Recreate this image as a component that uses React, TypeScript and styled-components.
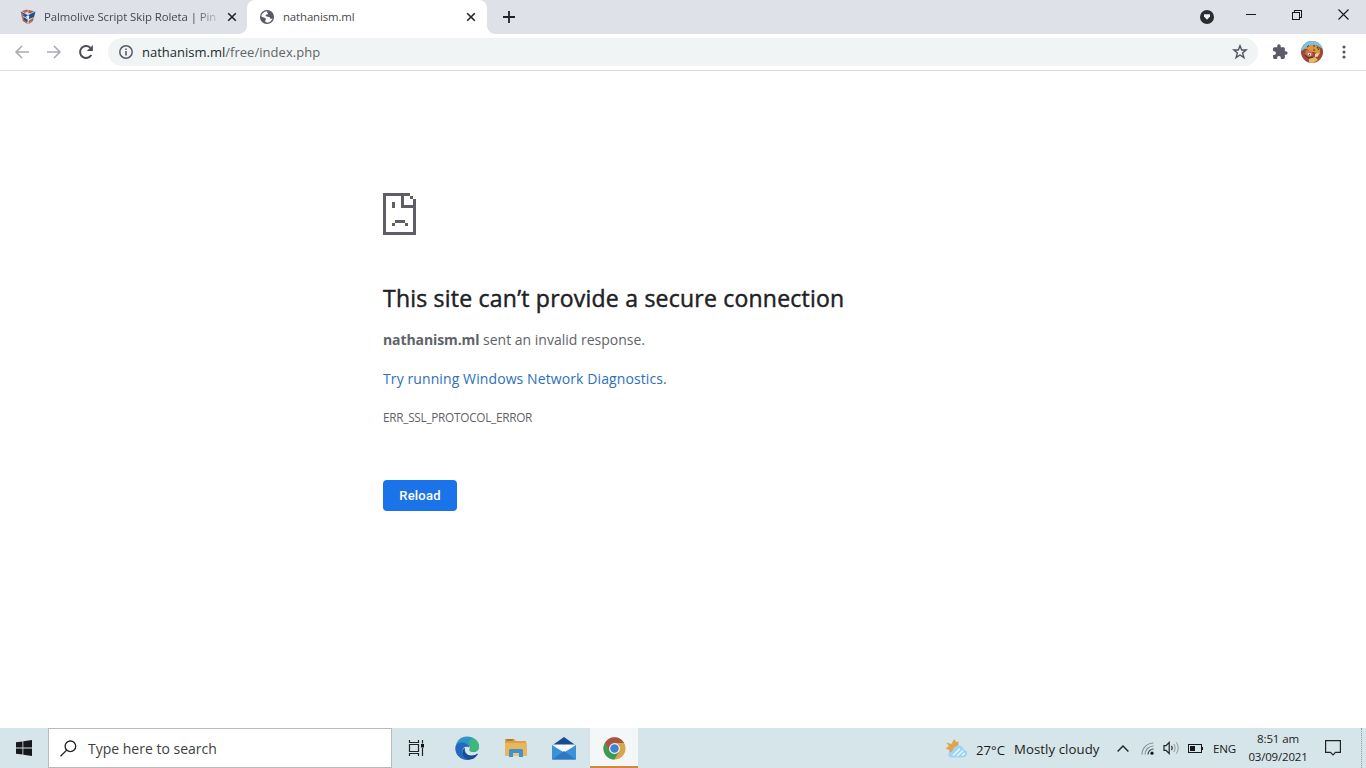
import React from "react";
import styled, { createGlobalStyle } from "styled-components";

const GlobalStyle = createGlobalStyle`
  * {
    box-sizing: border-box;
  }

  body {
    margin: 0;
    background: #ffffff;
    font-family: "Open Sans", "Noto Sans", sans-serif;
    overflow: hidden;
  }

  svg {
    display: block;
    flex: none;
  }
`;

const Screen = styled.div`
  width: 1366px;
  height: 768px;
  display: flex;
  flex-direction: column;
  background: #ffffff;
`;

/* Text whose glyphs are set on one line at a given size */
const Label = styled.span<{ $size: number; $spacing?: number; $color?: string }>`
  font-size: ${(p) => p.$size}px;
  letter-spacing: ${(p) => p.$spacing ?? 0}px;
  color: ${(p) => p.$color ?? "#1b1b1b"};
  white-space: pre;
`;

const TabStrip = styled.div`
  display: flex;
  height: 34px;
  flex: none;
  background: #dee1e8;
`;

const Tab = styled.div<{ $active?: boolean; $width: number }>`
  position: relative;
  display: flex;
  align-items: center;
  width: ${(p) => p.$width}px;
  height: 34px;
  padding: ${(p) => (p.$active ? "0 9px 0 12px" : "0 9px 0 20px")};
  border-radius: 8px 8px 0 0;
  background: ${(p) => (p.$active ? "#ffffff" : "transparent")};

  &::before,
  &::after {
    content: "";
    display: ${(p) => (p.$active ? "block" : "none")};
    position: absolute;
    bottom: 0;
    width: 8px;
    height: 8px;
  }

  &::before {
    left: -8px;
    background: radial-gradient(circle at 0 0, transparent 7.5px, #ffffff 8px);
  }

  &::after {
    right: -8px;
    background: radial-gradient(circle at 100% 0, transparent 7.5px, #ffffff 8px);
  }
`;

const TabTitle = styled.div<{ $fade?: boolean }>`
  flex: 1;
  display: flex;
  margin: 0 7px 0 8px;
  line-height: 16px;
  mask-image: ${(p) => (p.$fade ? "linear-gradient(to right, #000 86%, transparent 102%)" : "none")};
`;

const NewTab = styled.div`
  display: flex;
  align-items: center;
  margin-left: 16px;
`;

const WindowControls = styled.div`
  display: flex;
  margin-left: auto;
`;

const Control = styled.div<{ $width: number; $height?: number }>`
  display: flex;
  align-items: center;
  justify-content: center;
  width: ${(p) => p.$width}px;
  height: ${(p) => p.$height ?? 29}px;
`;

const Toolbar = styled.div`
  display: flex;
  align-items: center;
  height: 37px;
  flex: none;
  padding: 0 6px;
  border-bottom: 1px solid #dcdcde;
`;

const AddressBar = styled.div`
  display: flex;
  align-items: center;
  width: 1150px;
  height: 28px;
  margin: 0 6px;
  padding: 0 10px 0 11px;
  border-radius: 14px;
  background: #f1f4f4;
`;

const Url = styled.div`
  flex: 1;
  margin-left: 9px;
  padding-bottom: 2px;
  line-height: 18px;
`;

const Page = styled.main`
  flex: 1;
  padding: 122px 0 0 383px;
`;

const Title = styled.h1`
  margin: 46px 0 0;
  font-size: 23px;
  font-weight: 400;
  line-height: 34px;
  letter-spacing: 0.22px;
  color: #202124;
  -webkit-text-stroke: 0.45px #202124;
  white-space: nowrap;
`;

const Line = styled.p<{ $top: number }>`
  margin: ${(p) => p.$top}px 0 0;
  height: 24px;
  line-height: 24px;

  b {
    font-weight: 700;
    letter-spacing: -0.1px;
  }
`;

const ReloadButton = styled.button`
  display: block;
  width: 74px;
  height: 31px;
  margin-top: 52px;
  padding: 0;
  border: none;
  border-radius: 4px;
  background: #1a73e8;
  color: #ffffff;
  font-family: Roboto, sans-serif;
  font-size: 13px;
  font-weight: 500;
  line-height: 31px;
  letter-spacing: 0.2px;
`;

const Taskbar = styled.footer`
  display: flex;
  height: 40px;
  flex: none;
  background: #d6e5ea;
`;

const Slot = styled.div<{ $width: number; $active?: boolean }>`
  display: flex;
  align-items: center;
  justify-content: center;
  width: ${(p) => p.$width}px;
  height: 40px;
  flex: none;
  background: ${(p) => (p.$active ? "#f3f7f8" : "transparent")};
  border-bottom: ${(p) => (p.$active ? "2px solid #d0873f" : "none")};
  padding-top: ${(p) => (p.$active ? 2 : 0)}px;
`;

const SearchBox = styled.div`
  display: flex;
  align-items: center;
  gap: 11px;
  width: 344px;
  height: 40px;
  padding-left: 11px;
  border: 1px solid #b9bcbe;
  background: #ffffff;
`;

const Tray = styled.div`
  display: flex;
  align-items: center;
  margin-left: auto;
`;

const Weather = styled.div`
  display: flex;
  align-items: center;
  width: 166px;
  padding-top: 1px;
`;

const Temperature = styled.div`
  width: 38px;
  margin-left: 8px;
  flex: none;
`;

const Clock = styled.div`
  display: flex;
  flex-direction: column;
  align-items: center;
  width: 72px;
  line-height: 18px;
`;

const ShowDesktop = styled.div`
  width: 5px;
  height: 40px;
  border-left: 1px dotted #8d9aa0;
`;

const CloseIcon = () => (
  <svg width="10" height="10" viewBox="0 0 10 10">
    <path d="M1.2 1.2 8.8 8.8M8.8 1.2 1.2 8.8" stroke="#232529" strokeWidth="1.6" />
  </svg>
);

const CubeIcon = () => (
  <svg width="16" height="16" viewBox="0 0 16 16">
    <path d="M8 0.5 15.5 2.5 13.5 11.5 8 15.5 2.5 12 0.5 2.5Z" fill="#d0d9e4" />
    <path d="M0.5 2.5 7.5 6 7.5 9 3 7Z" fill="#17549b" />
    <path d="M2 7.5 7 10.5 7.5 15 2.8 12Z" fill="#b6654d" />
    <path d="M3.5 8 7.5 10.5 7.5 13 4 11Z" fill="#214f82" />
    <path d="M8.5 6 15.5 2.5 14 8 9 10Z" fill="#1d4f88" />
    <path d="M9 11.5 13.7 8.5 13 12 8.5 15.3Z" fill="#b6654d" />
    <path d="M2 2 7 0.5 9 2 4.5 4Z" fill="#be6344" />
    <path d="M9 1 14 2.3 10.5 4.5 8 3.5Z" fill="#af5d48" />
    <path d="M1 4 3.6 5 3 8.8 1.7 8Z" fill="#c46e50" />
    <path d="M5.8 7.5 8 6.8 9.6 7.8 8 9.4Z" fill="#edf2f6" />
  </svg>
);

const GlobeIcon = () => (
  <svg width="16" height="16" viewBox="0 0 16 16">
    <circle cx="8" cy="8" r="6.4" fill="#ffffff" stroke="#5a5967" strokeWidth="1.3" />
    <path
      d="M9 1.6C7.8 2.6 7.6 3.6 8.8 4.200 9.600 4.700 8.800 5.400 7.400 5.600 6.200 5.900 6.300 7.300 7.600 7.600 9.500 8 10.900 7.800 11.200 9.200 11.400 10.200 12.600 9.900 14.200 9.200 15 5.100 12.500 1.800 9 1.600Z"
      fill="#5a5967"
    />
    <path d="M1.700 7.600C3.500 8.200 6.300 8.600 6.900 9.800 7.300 10.900 5.600 11.200 6.300 12.500 6.600 13.400 7.600 13.200 8.400 14.300 4.600 14.700 1.500 11.700 1.700 7.600Z" fill="#5a5967" />
  </svg>
);

const ArrowIcon = ({ forward }: { forward?: boolean }) => (
  <svg width="16" height="16" viewBox="0 0 16 16">
    <g
      transform={forward ? "translate(16 0) scale(-1 1)" : undefined}
      fill="none"
      stroke="#aaa9b1"
      strokeWidth="1.5"
    >
      <path d="M15 8H2M8 2 2 8 8 14" />
    </g>
  </svg>
);

const ReloadIcon = () => (
  <svg width="16" height="16" viewBox="0 0 16 16">
    <path d="M13.3 11A6 6 0 1 1 12.3 3.7" fill="none" stroke="#4c4d56" strokeWidth="2" />
    <path d="M14.9 0.9V7H8.8Z" fill="#4c4d56" />
  </svg>
);

const InfoIcon = () => (
  <svg width="14" height="14" viewBox="0 0 14 14">
    <circle cx="7" cy="7" r="6.2" fill="none" stroke="#5a5b66" strokeWidth="1.5" />
    <path d="M7 6V10.5M7 3.4V5" stroke="#5a5b66" strokeWidth="1.6" />
  </svg>
);

const StarIcon = () => (
  <svg width="16" height="16" viewBox="0 0 16 16">
    <path
      d="M8 1.8 9.7 6H14.1L10.6 8.9 11.9 13.6 8 11 4.1 13.6 5.4 8.9 1.9 6H6.3Z"
      fill="none"
      stroke="#50505f"
      strokeWidth="1.4"
    />
  </svg>
);

const PuzzleIcon = () => (
  <svg width="16" height="16" viewBox="0.5 0.5 23 23">
    <path
      d="M20.5 11H19V7c0-1.1-.9-2-2-2h-4V3.5a2.5 2.5 0 0 0-5 0V5H4c-1.1 0-2 .9-2 2v3.8h1.5a2.7 2.7 0 0 1 0 5.4H2V20c0 1.1.9 2 2 2h3.8v-1.5a2.7 2.7 0 0 1 5.4 0V22H17c1.1 0 2-.9 2-2v-4h1.5a2.5 2.5 0 0 0 0-5z"
      fill="#5c5b68"
    />
  </svg>
);

const AvatarIcon = () => (
  <svg width="22" height="22" viewBox="0 0 22 22">
    <clipPath id="avatar">
      <circle cx="11" cy="11" r="11" />
    </clipPath>
    <g clipPath="url(#avatar)">
      <path d="M0 0H22V22H0Z" fill="#9d4935" />
      <path d="M0 0H22V8L15 4 8 5 2 9 0 10Z" fill="#7cc0e4" />
      <path d="M3 8 8 4.5 14 3.5 19 8 19 13 16 15 14 11 9 11 6 8Z" fill="#d9963c" />
      <path d="M5 9 10 10 12 14 8 16 4 13Z" fill="#c9745a" />
      <path d="M7 12 10 12.5 10 14.5 7 14Z" fill="#efe0cd" />
      <path d="M14 13 18 12 17 15.5 14 16Z" fill="#ecd3ba" />
      <path d="M8 18 14 16 17 19 12 22 8 22Z" fill="#e6b764" />
      <path d="M6 6 8 4.5M12 5H14M16 6 18 9M8 13.5H9M12 9H14M4 14 7 17 12 16" fill="none" stroke="#4c3030" />
    </g>
  </svg>
);

const MenuDots = () => (
  <svg width="4" height="14" viewBox="0 0 4 14">
    <circle cx="2" cy="2" r="1.5" fill="#51515c" />
    <circle cx="2" cy="7" r="1.5" fill="#51515c" />
    <circle cx="2" cy="12" r="1.5" fill="#51515c" />
  </svg>
);

const SadPageIcon = () => (
  <svg width="33" height="42" viewBox="0 0 11 14" shapeRendering="crispEdges">
    <path
      d="M0 0H9V1H7V4H11V14H0ZM1 1V13H10V5H6V1ZM9 1H10V2H9ZM10 2H11V4H10ZM3 3H4V5H3ZM4 9H7.300V10H4ZM3 10H4V11H3ZM7.300 10H8.300V11H7.300Z"
      fill="#5f5e66"
      fillRule="evenodd"
    />
  </svg>
);

const WindowsIcon = () => (
  <svg width="16" height="16" viewBox="0 0 16 16">
    <path d="M0 2.3 6.5 1.4V7.6H0ZM7.3 1.3 16 0V7.6H7.3ZM0 8.4H6.5V14.6L0 13.7ZM7.3 8.4H16V16L7.3 14.7Z" fill="#16181b" />
  </svg>
);

const SearchIcon = () => (
  <svg width="17" height="17" viewBox="0 0 17 17">
    <circle cx="10.4" cy="6.3" r="5.3" fill="none" stroke="#222" strokeWidth="1.3" />
    <path d="M6.7 10.1 0.5 16.3" stroke="#222" strokeWidth="1.3" />
  </svg>
);

const TaskViewIcon = () => (
  <svg width="17" height="16" viewBox="0 0 17 16">
    <path d="M1.5 0V2.5H10.5V0M1.5 16V13.5H10.5V16M1.5 4.5H10.5V11.5H1.5ZM14.5 0V3.5M14.5 8V16" fill="none" stroke="#202428" strokeWidth="1.2" />
    <path d="M13 4H16V7.5H13Z" fill="#111" />
  </svg>
);

const EdgeIcon = () => (
  <svg width="24" height="24" viewBox="0 0 24 24">
    <path d="M0.5 11C1.5 4.5 6 0.5 12 0.5 19 0.5 24 5 24 10.5 24 14 21.5 16 18.5 16 15.5 16 14 15 14.5 13.5 15.5 12 15 8.5 10.5 7.5 6 6.6 2 8 0.5 11Z" fill="#3295c9" />
    <path d="M17 2C21.3 3.5 24 7 24 10.7 24 14 21.5 16 18.5 16 15.5 16 14 15 14.5 13.5 16.5 11 15.5 8.5 13.5 6.5Z" fill="#3fb878" />
    <path d="M0.3 12C0.5 7 7 5 11.5 7.5 13.8 8.8 14.5 10 14.4 11.5 11 9.5 7.5 11.5 7.5 15 7.5 19 11 23 15.5 23.5 7 25.5 0 19.5 0.3 12Z" fill="#2469c0" />
    <path d="M10 12C9 16 12 19.5 16.5 19.5 19 19.5 20.5 18.8 22 17.8 22.8 17.5 23 18 22.5 18.8 20.5 22 17.5 23.7 14 23.7 9.5 22.8 7.3 19 7.5 15.5 7.6 13.5 8.5 12.5 10 12Z" fill="#164c93" />
  </svg>
);

const ExplorerIcon = () => (
  <svg width="22" height="20" viewBox="0 0 22 20">
    <path d="M0 1H9L11 3H21V18H0Z" fill="#dda049" />
    <path d="M0 5H22V18H0Z" fill="#eab65c" />
    <path d="M1.5 2H8" stroke="#8f6332" strokeWidth="1.2" />
    <path d="M4 12 5 11H17L18 12V19H14V15H8V19H4Z" fill="#3f91cf" />
    <path d="M8 15H14V18H8Z" fill="#f0c476" />
  </svg>
);

const MailIcon = () => (
  <svg width="24" height="23" viewBox="0 0 24 23">
    <path d="M0 8.500 12 0 24 8.500Z" fill="#194b92" />
    <path d="M1 7.5H23V15H1Z" fill="#f7fbfe" />
    <path d="M0 8 12 15.5 24 8V22.5H0Z" fill="#3c91d8" />
    <path d="M0 22.5 12 14 24 22.5Z" fill="#2c78c4" />
  </svg>
);

const ChromeIcon = () => (
  <svg width="23" height="23" viewBox="0 0 24 24">
    <circle cx="12" cy="12" r="11.5" fill="#d8a548" />
    <path d="M2 6.2A11.5 11.5 0 0 1 22 6.2H12L7 15Z" fill="#a85445" />
    <path d="M2 6.2 7 14.9 12 17.8 16.8 15 11.8 23.5A11.5 11.5 0 0 1 2 6.2Z" fill="#3c9a55" />
    <circle cx="12" cy="12" r="5.7" fill="#eef3f8" />
    <circle cx="12" cy="12" r="4.4" fill="#3f83d0" />
  </svg>
);

const WeatherIcon = () => (
  <svg width="23" height="20" viewBox="0 0 23 20">
    <path d="M9 0 11.5 3 13.500 2.500 13.500 6 8 14 4 14.500 4.500 11 0.500 9.500 4 7 1 3.500 6.500 5Z" fill="#dda452" />
    <path d="M4 17.5C2.500 15.500 4 12.500 7 12.500 8 8.500 10.500 6.500 13.500 6.500 16.500 6.500 18.500 8.500 19 11 22 11 23 14 21.500 16.500 20.500 18 19 18.500 17 18.500H7C5.500 18.500 4.500 18.200 4 17.500Z" fill="#9cd5f2" />
    <path d="M8 16.5 15 9.5M12 17 18 11.5M17 16.5 20 14" stroke="#e9f6fc" strokeWidth="1.5" />
  </svg>
);

const WifiIcon = () => (
  <svg width="13" height="13" viewBox="0 0 13 13">
    <path d="M1 12.5A11.5 11.5 0 0 1 12.5 1M4 12.5A8.5 8.5 0 0 1 12.5 4" fill="none" stroke="#8a9398" strokeWidth="1.1" />
    <path d="M7 12.5A5.5 5.5 0 0 1 12.5 7" fill="none" stroke="#3f464a" strokeWidth="1.2" />
    <circle cx="11" cy="11.2" r="1.6" fill="#15181a" />
  </svg>
);

const SpeakerIcon = () => (
  <svg width="17" height="14" viewBox="0 0 17 14">
    <path d="M1 4.7H3L6.2 1.5V12.5L3 9.3H1Z" fill="none" stroke="#202427" strokeWidth="1.2" />
    <path d="M8.5 4.8Q10 7 8.5 9.2" fill="none" stroke="#202427" strokeWidth="1.2" />
    <path d="M11 3Q13.5 7 11 11M13.4 1.3Q17 7 13.4 12.7" fill="none" stroke="#8e999e" />
  </svg>
);

const BatteryIcon = () => (
  <svg width="15" height="9" viewBox="0 0 15 9" shapeRendering="crispEdges">
    <path d="M0.5 0.5H13.5V8.5H0.5Z" fill="none" stroke="#16191b" />
    <path d="M2 2H7V7H2ZM14 3H15V6H14Z" fill="#16191b" />
  </svg>
);

const App: React.FC = () => {
  return (
    <>
      <GlobalStyle />
      <Screen>
        <TabStrip>
          <Tab $width={247}>
            <CubeIcon />
            <TabTitle $fade>
              <Label $size={11.4} $spacing={-0.08} $color="#45484e">Palmolive Script Skip Roleta | Pin</Label>
            </TabTitle>
            <Control $width={12}>
              <CloseIcon />
            </Control>
          </Tab>
          <Tab $active $width={240}>
            <GlobeIcon />
            <TabTitle>
              <Label $size={11.4} $spacing={-0.12} $color="#45484e">nathanism.ml</Label>
            </TabTitle>
            <Control $width={14}>
              <CloseIcon />
            </Control>
          </Tab>
          <NewTab>
            <svg width="12" height="12" viewBox="0 0 12 12">
              <path d="M6 0V12M0 6H12" stroke="#202226" strokeWidth="1.8" />
            </svg>
          </NewTab>
          <WindowControls>
            <Control $width={42} $height={34}>
              <svg width="14" height="14" viewBox="0 0 14 14">
                <circle cx="7" cy="7" r="7" fill="#2b2c31" />
                <path d="M4 4.2H10V6.5L7 9.800 4 6.500Z" fill="#f0f1f4" />
              </svg>
            </Control>
            <Control $width={46}>
              <svg width="10" height="1" viewBox="0 0 10 1">
                <path d="M0 0H10V1H0Z" fill="#17181a" />
              </svg>
            </Control>
            <Control $width={46}>
              <svg width="10" height="10" viewBox="0 0 10 10" shapeRendering="crispEdges">
                <path d="M0.5 2.5H7.5V9.5H0.5ZM2.5 2V0.5H9.5V7.5H8" fill="none" stroke="#17181a" />
              </svg>
            </Control>
            <Control $width={46}>
              <svg width="11" height="11" viewBox="0 0 11 11">
                <path d="M0.5 0.5 10.5 10.5M10.5 0.5 0.5 10.5" stroke="#17181a" strokeWidth="1.1" />
              </svg>
            </Control>
          </WindowControls>
        </TabStrip>

        <Toolbar>
          <Control $width={32}>
            <ArrowIcon />
          </Control>
          <Control $width={32}>
            <ArrowIcon forward />
          </Control>
          <Control $width={32}>
            <ReloadIcon />
          </Control>
          <AddressBar>
            <InfoIcon />
            <Url>
              <Label $size={13} $color="#202b30">nathanism.ml</Label>
              <Label $size={13} $spacing={0.03} $color="#5f6468">/free/index.php</Label>
            </Url>
            <StarIcon />
          </AddressBar>
          <Control $width={32}>
            <PuzzleIcon />
          </Control>
          <Control $width={32}>
            <AvatarIcon />
          </Control>
          <Control $width={32}>
            <MenuDots />
          </Control>
        </Toolbar>

        <Page>
          <SadPageIcon />
          <Title>This site can’t provide a secure connection</Title>
          <Line $top={12}>
            <Label $size={14} $color="#5f6368">
              <b>nathanism.ml</b> sent an invalid response.
            </Label>
          </Line>
          <Line $top={15}>
            <Label $size={14} $spacing={0.1} $color="#2b70bd">Try running Windows Network Diagnostics</Label>
            <Label $size={14} $color="#5f6368">.</Label>
          </Line>
          <Line $top={14}>
            <Label $size={11.8} $spacing={-0.28} $color="#5f6368">ERR_SSL_PROTOCOL_ERROR</Label>
          </Line>
          <ReloadButton>Reload</ReloadButton>
        </Page>

        <Taskbar>
          <Slot $width={48}>
            <WindowsIcon />
          </Slot>
          <SearchBox>
            <SearchIcon />
            <Label $size={14} $color="#3c3f42">Type here to search</Label>
          </SearchBox>
          <Slot $width={48}>
            <TaskViewIcon />
          </Slot>
          <Slot $width={54}>
            <EdgeIcon />
          </Slot>
          <Slot $width={44}>
            <ExplorerIcon />
          </Slot>
          <Slot $width={52}>
            <MailIcon />
          </Slot>
          <Slot $width={48} $active>
            <ChromeIcon />
          </Slot>
          <Tray>
            <Weather>
              <WeatherIcon />
              <Temperature>
                <Label $size={13.2}>27°C</Label>
              </Temperature>
              <Label $size={13.2} $spacing={0.08}>Mostly cloudy</Label>
            </Weather>
            <Slot $width={24}>
              <svg width="12" height="7" viewBox="0 0 12 7">
                <path d="M0.6 6.4 6 1 11.4 6.4" fill="none" stroke="#202427" strokeWidth="1.4" />
              </svg>
            </Slot>
            <Slot $width={24}>
              <WifiIcon />
            </Slot>
            <Slot $width={24}>
              <SpeakerIcon />
            </Slot>
            <Slot $width={24}>
              <BatteryIcon />
            </Slot>
            <Slot $width={35}>
              <Label $size={11.6} $spacing={-0.15}>ENG</Label>
            </Slot>
            <Clock>
              <Label $size={11.5} $spacing={-0.12}>8:51 am</Label>
              <Label $size={11.5} $spacing={-0.2}>03/09/2021</Label>
            </Clock>
            <Slot $width={38}>
              <svg width="16" height="16" viewBox="0 0 16 16">
                <path d="M0.6 0.6H15.4V12.4H10.5L8 15 5.5 12.4H0.6Z" fill="none" stroke="#202427" strokeWidth="1.2" />
              </svg>
            </Slot>
            <Slot $width={9} />
            <ShowDesktop />
          </Tray>
        </Taskbar>
      </Screen>
    </>
  );
};

export default App;
